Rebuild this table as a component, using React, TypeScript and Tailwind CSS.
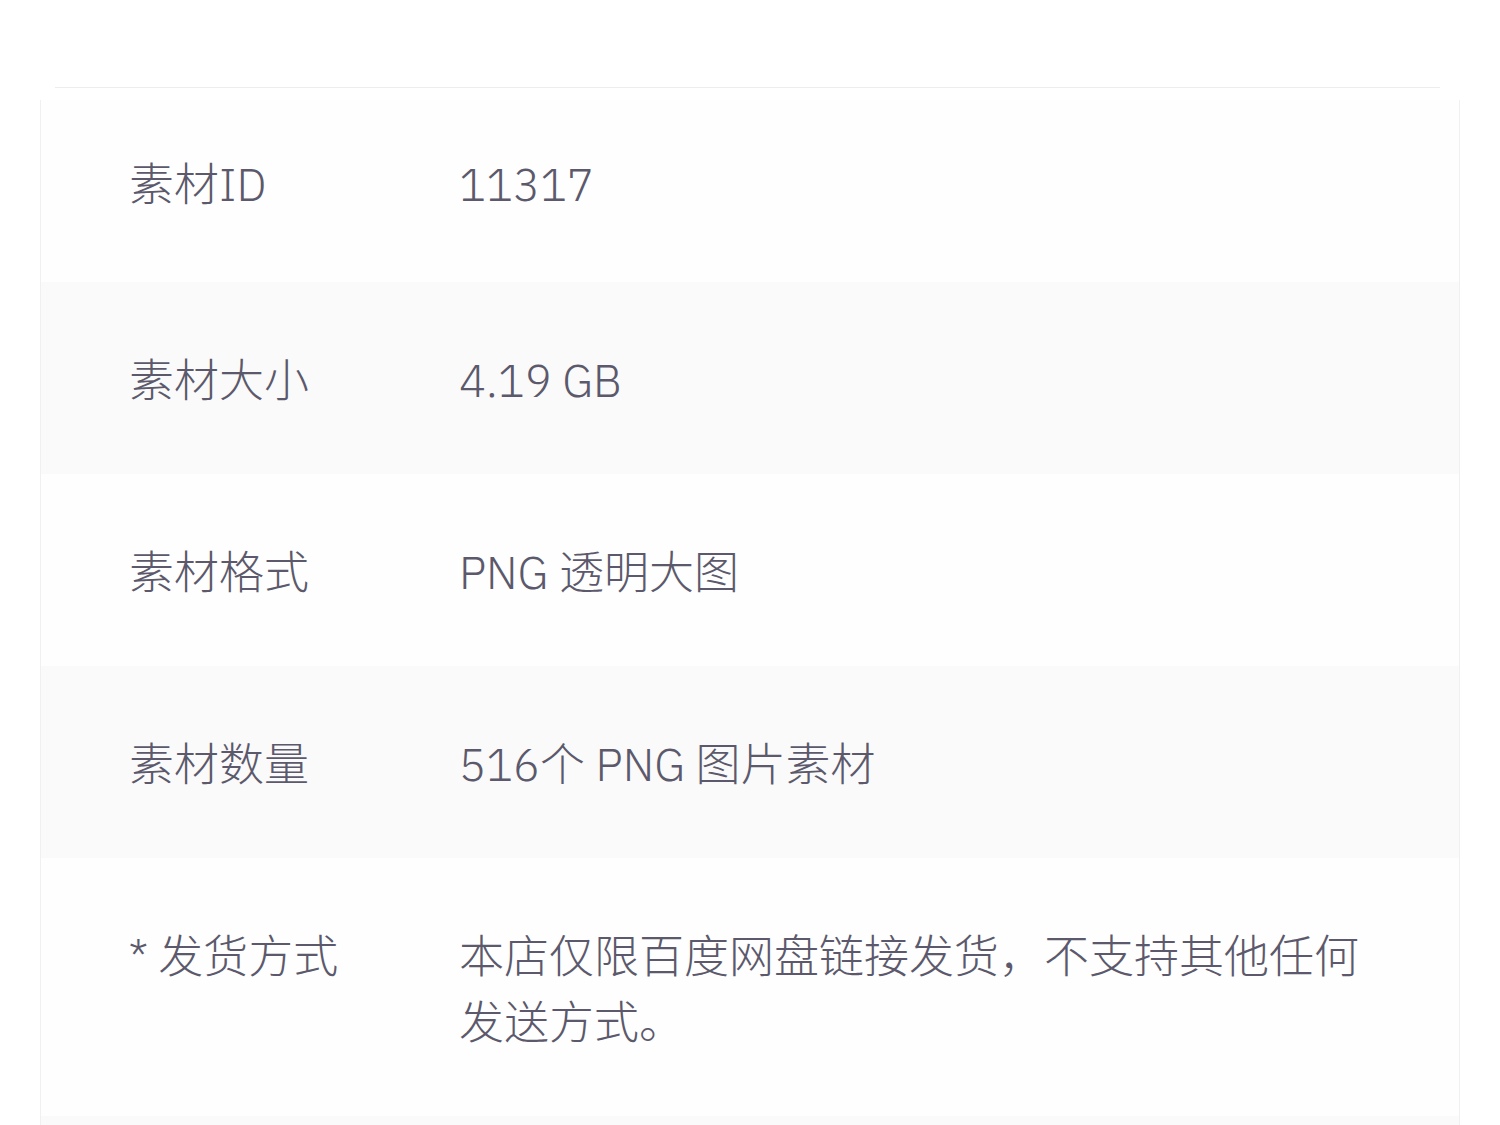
const rows: { label: string; value: string; shaded: boolean }[] = [
  { label: '素材ID', value: '11317', shaded: false },
  { label: '素材大小', value: '4.19 GB', shaded: true },
  { label: '素材格式', value: 'PNG 透明大图', shaded: false },
  { label: '素材数量', value: '516个 PNG 图片素材', shaded: true },
  { label: '* 发货方式', value: '本店仅限百度网盘链接发货，不支持其他任何发送方式。', shaded: false },
  { label: '', value: '', shaded: true },
];

export default function App() {
  return (
    <div
      className="w-[1500px] h-[1125px] overflow-hidden bg-white text-[#5b596b]"
      style={{ fontFamily: '"IBM Plex Sans", "Noto Sans CJK SC", "Noto Sans", sans-serif' }}
    >
      <div className="pt-[87px] pl-[55px] pr-[60px]">
        <div className="h-px bg-[#ededed]" />
      </div>
      <div className="mx-[40px] mt-[12px] border-x border-[#f0f0f0] bg-[#fefefe]">
        {rows.map((row, i) => (
          <div
            key={i}
            className={`flex pl-[88px] pr-[90px] text-[45px] font-light leading-[66px] ${
              row.shaded ? 'bg-[#fafafa]' : 'bg-[#fefefe]'
            } ${i === 0 ? 'pt-[51px] pb-[65px]' : 'pt-[65px] pb-[61px]'}`}
          >
            <div className="w-[330px] shrink-0 min-h-[66px]">{row.label}</div>
            <div className="flex-1">{row.value}</div>
          </div>
        ))}
      </div>
    </div>
  );
}
